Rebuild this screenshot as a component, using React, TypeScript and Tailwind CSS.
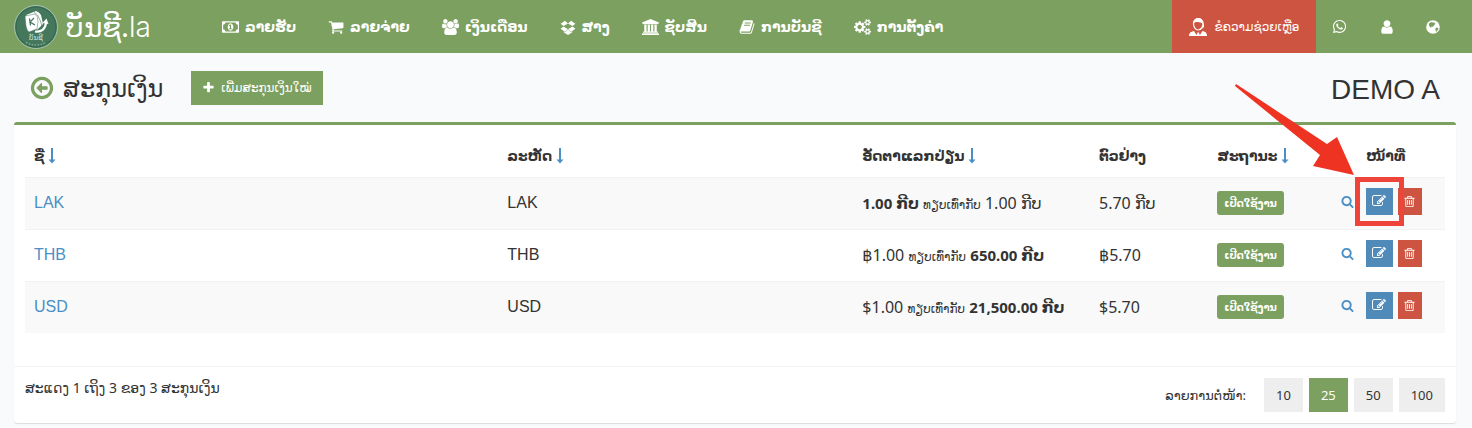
import type { ReactNode } from "react";
import { FaWhatsapp } from "react-icons/fa";

type IconProps = { path: string; wide?: boolean; className: string };

function Icon({ path, wide, className }: IconProps) {
  return (
    <svg
      viewBox={wide ? "0 0 1920 1792" : "0 0 1792 1792"}
      className={`shrink-0 ${className}`}
      fill="currentColor"
      aria-hidden="true"
    >
      <path d={path} />
    </svg>
  );
}

const icons = {
  money:
    "M768 1152h384v-96h-128v-448h-114l-148 137 77 80q42-37 55-57h2v288h-128v96zm512-256q0 70-21 142t-59.5 134-101.5 101-138 39-138-39-101.5-101-59.5-134-21-142 21-142 59.5-134 101.5-101 138-39 138 39 101.5 101 59.5 134 21 142zm512 256v-512q-106 0-181-75t-75-181h-1152q0 106-75 181t-181 75v512q106 0 181 75t75 181h1152q0-106 75-181t181-75zm128-832v1152q0 26-19 45t-45 19h-1792q-26 0-45-19t-19-45v-1152q0-26 19-45t45-19h1792q26 0 45 19t19 45z",
  cart: "M704 1536q0 52-38 90t-90 38-90-38-38-90 38-90 90-38 90 38 38 90zm896 0q0 52-38 90t-90 38-90-38-38-90 38-90 90-38 90 38 38 90zm128-1088v512q0 24-16.5 42.5t-40.5 21.5l-1044 122q13 60 13 70 0 16-24 64h920q26 0 45 19t19 45-19 45-45 19h-1024q-26 0-45-19t-19-45q0-11 8-31.5t16-36 21.5-40 15.5-29.5l-177-823h-204q-26 0-45-19t-19-45 19-45 45-19h256q16 0 28.5 6.5t19.5 15.5 13 24.5 8 26 5.5 29.5 4.5 26h1201q26 0 45 19t19 45z",
  users:
    "M593 896q-162 5-265 128h-134q-82 0-138-40.5t-56-118.5q0-353 124-353 6 0 43.5 21t97.5 42.5 119 21.5q67 0 133-23-5 37-5 66 0 159 90 293zm1071 637q0 120-73 189.5t-194 69.5h-874q-121 0-194-69.5t-73-189.5q0-53 3.5-103.5t14-109 26.5-108.5 43-97.5 62-81 85.5-53.5 111.5-20q10 0 43 21.5t73 48 107 48 135 21.5 135-21.5 107-48 73-48 43-21.5q61 0 111.5 20t85.5 53.5 62 81 43 97.5 26.5 108.5 14 109 3.5 103.5zm-1024-1277q0 106-75 181t-181 75-181-75-75-181 75-181 181-75 181 75 75 181zm704 384q0 159-112.5 271.5t-271.5 112.5-271.5-112.5-112.5-271.5 112.5-271.5 271.5-112.5 271.5 112.5 112.5 271.5zm576 225q0 78-56 118.5t-138 40.5h-134q-103-123-265-128 90-134 90-293 0-29-5-66 66 23 133 23 59 0 119-21.5t97.5-42.5 43.5-21q124 0 124 353zm-128-609q0 106-75 181t-181 75-181-75-75-181 75-181 181-75 181 75 75 181z",
  dropbox:
    "M402 829l494 305-342 285-490-319zm986 555v108l-490 293v1l-1-1-1 1v-1l-489-293v-108l147 96 342-284v-2l1 1 1-1v2l343 284zm-834-1177l342 285-494 304-338-270zm836 622l338 271-489 319-343-285zm-151-622l489 319-338 270-494-304z",
  bank: "M960 0l960 384v128h-128q0 26-20.5 45t-48.5 19h-1526q-28 0-48.5-19t-20.5-45h-128v-128zm-704 640h256v768h128v-768h256v768h128v-768h256v768h128v-768h256v768h59q28 0 48.5 19t20.5 45v64h-1664v-64q0-26 20.5-45t48.5-19h59v-768zm1595 960q28 0 48.5 19t20.5 45v128h-1920v-128q0-26 20.5-45t48.5-19h1782z",
  book: "M1703 478q40 57 18 129l-275 906q-19 64-76.5 107.5t-122.5 43.5h-923q-77 0-148.5-53.5t-99.5-131.5q-24-67-2-127 0-4 3-27t4-37q1-8-3-21.5t-3-19.5q2-11 8-21t16.5-23.5 16.5-23.5q23-38 45-91.5t30-91.5q3-10 .5-30t-.5-28q3-11 17-28t17-23q21-36 42-92t25-90q1-9-2.5-32t.5-28q4-13 22-30.5t22-22.5q19-26 42.5-84.5t27.5-96.5q1-8-3-25.5t-2-26.5q2-8 9-18t18-23 17-21q8-12 16.5-30.5t15-35 16-36 19.5-32 26.5-23.5 36-11.5 47.5 5.5l-1 3q38-9 51-9h761q74 0 114 56t18 130l-274 906q-36 119-71.5 153.5t-128.5 34.5h-869q-27 0-38 15-11 16-1 43 24 70 144 70h923q29 0 56-15.5t35-41.5l300-987q7-22 5-57 38 15 59 43zm-1064 2q-4 13 2 22.5t20 9.5h608q13 0 25.5-9.5t16.5-22.5l21-64q4-13-2-22.5t-20-9.5h-608q-13 0-25.5 9.5t-16.5 22.5zm-83 256q-4 13 2 22.5t20 9.5h608q13 0 25.5-9.5t16.5-22.5l21-64q4-13-2-22.5t-20-9.5h-608q-13 0-25.5 9.5t-16.5 22.5z",
  cogs: "M896 896q0-106-75-181t-181-75-181 75-75 181 75 181 181 75 181-75 75-181zm768 512q0-52-38-90t-90-38-90 38-38 90q0 53 37.5 90.5t90.5 37.5 90.5-37.5 37.5-90.5zm0-1024q0-52-38-90t-90-38-90 38-38 90q0 53 37.5 90.5t90.5 37.5 90.5-37.5 37.5-90.5zm-384 421v185q0 10-7 19.5t-16 10.5l-155 24q-11 35-32 76 34 48 90 115 7 11 7 20 0 12-7 19-23 30-82.5 89.5t-78.5 59.5q-11 0-21-7l-115-90q-37 19-77 31-11 108-23 155-7 24-30 24h-186q-11 0-20-7.5t-10-17.5l-23-153q-34-10-75-31l-118 89q-7 7-20 7-11 0-21-8-144-133-144-160 0-9 7-19 10-14 41-53t47-61q-23-44-35-82l-152-24q-10-1-17-9.5t-7-19.5v-185q0-10 7-19.5t16-10.5l155-24q11-35 32-76-34-48-90-115-7-11-7-20 0-12 7-20 22-30 82-89t79-59q11 0 21 7l115 90q34-18 77-32 11-108 23-154 7-24 30-24h186q11 0 20 7.5t10 17.5l23 153q34 10 75 31l118-89q8-7 20-7 11 0 21 8 144 133 144 160 0 8-7 19-12 16-42 54t-45 60q23 48 34 82l152 23q10 2 17 10.5t7 19.5zm640 533v140q0 16-149 31-12 27-30 52 51 113 51 138 0 4-4 7-122 71-124 71-8 0-46-47t-52-68q-20 2-30 2t-30-2q-14 21-52 68t-46 47q-2 0-124-71-4-3-4-7 0-25 51-138-18-25-30-52-149-15-149-31v-140q0-16 149-31 13-29 30-52-51-113-51-138 0-4 4-7 4-2 35-20t59-34 30-16q8 0 46 46.5t52 67.5q20-2 30-2t30 2q51-71 92-112l6-2q4 0 124 70 4 3 4 7 0 25-51 138 17 23 30 52 149 15 149 31zm0-1024v140q0 16-149 31-12 27-30 52 51 113 51 138 0 4-4 7-122 71-124 71-8 0-46-47t-52-68q-20 2-30 2t-30-2q-14 21-52 68t-46 47q-2 0-124-71-4-3-4-7 0-25 51-138-18-25-30-52-149-15-149-31v-140q0-16 149-31 13-29 30-52-51-113-51-138 0-4 4-7 4-2 35-20t59-34 30-16q8 0 46 46.5t52 67.5q20-2 30-2t30 2q51-71 92-112l6-2q4 0 124 70 4 3 4 7 0 25-51 138 17 23 30 52 149 15 149 31z",
  user: "M1536 1399q0 109-62.5 187t-150.5 78h-854q-88 0-150.5-78t-62.5-187q0-85 8.5-160.5t31.5-152 58.5-131 94-89 134.5-34.5q131 128 313 128t313-128q76 0 134.5 34.5t94 89 58.5 131 31.5 152 8.5 160.5zm-256-887q0 159-112.5 271.5t-271.5 112.5-271.5-112.5-112.5-271.5 112.5-271.5 271.5-112.5 271.5 112.5 112.5 271.5z",
  back: "M1280 800v192q0 13-9.5 22.5t-22.5 9.5h-352v192q0 14-9 23t-23 9q-12 0-24-10l-319-319q-9-9-9-23t9-23l320-320q9-9 23-9 13 0 22.5 9.5t9.5 22.5v192h352q13 0 22.5 9.5t9.5 22.5zm160 96q0-148-73-273t-198-198-273-73-273 73-198 198-73 273 73 273 198 198 273 73 273-73 198-198 73-273zm224 0q0 209-103 385.5t-279.5 279.5-385.5 103-385.5-103-279.5-279.5-103-385.5 103-385.5 279.5-279.5 385.5-103 385.5 103 279.5 279.5 103 385.5z",
  plus: "M1600 736v192q0 40-28 68t-68 28h-416v416q0 40-28 68t-68 28h-192q-40 0-68-28t-28-68v-416h-416q-40 0-68-28t-28-68v-192q0-40 28-68t68-28h416v-416q0-40 28-68t68-28h192q40 0 68 28t28 68v416h416q40 0 68 28t28 68z",
  search:
    "M1216 832q0-185-131.5-316.5t-316.5-131.5-316.5 131.5-131.5 316.5 131.5 316.5 316.5 131.5 316.5-131.5 131.5-316.5zm512 832q0 52-38 90t-90 38q-54 0-90-38l-343-342q-179 124-399 124-143 0-273.5-55.5t-225-150-150-225-55.5-273.5 55.5-273.5 150-225 225-150 273.5-55.5 273.5 55.5 225 150 150 225 55.5 273.5q0 220-124 399l343 343q37 37 37 90z",
  edit: "M888 1184l116-116-152-152-116 116v56h96v96h56zm440-720q-16-16-33 1l-350 350q-17 17-1 33t33-1l350-350q17-17 1-33zm80 594v190q0 119-84.5 203.5t-203.5 84.5h-832q-119 0-203.5-84.5t-84.5-203.5v-832q0-119 84.5-203.5t203.5-84.5h832q63 0 117 25 15 7 18 23 3 17-9 29l-49 49q-14 14-32 8-23-6-45-6h-832q-66 0-113 47t-47 113v832q0 66 47 113t113 47h832q66 0 113-47t47-113v-126q0-13 9-22l64-64q15-15 35-7t20 29zm-96-738l288 288-672 672h-288v-288zm444 132l-92 92-288-288 92-92q28-28 68-28t68 28l152 152q28 28 28 68t-28 68z",
  trash:
    "M704 736v576q0 14-9 23t-23 9h-64q-14 0-23-9t-9-23v-576q0-14 9-23t23-9h64q14 0 23 9t9 23zm256 0v576q0 14-9 23t-23 9h-64q-14 0-23-9t-9-23v-576q0-14 9-23t23-9h64q14 0 23 9t9 23zm256 0v576q0 14-9 23t-23 9h-64q-14 0-23-9t-9-23v-576q0-14 9-23t23-9h64q14 0 23 9t9 23zm128 724v-948h-896v948q0 22 7 40.5t14.5 27 10.5 8.5h832q3 0 10.5-8.5t14.5-27 7-40.5zm-672-1076h448l-48-117q-7-9-17-11h-317q-10 2-17 11zm928 32v64q0 14-9 23t-23 9h-96v948q0 83-47 143.5t-113 60.5h-832q-66 0-113-58.5t-47-141.5v-952h-96q-14 0-23-9t-9-23v-64q0-14 9-23t23-9h309l70-167q15-37 54-63t79-26h320q40 0 79 26t54 63l70 167h309q14 0 23 9t9 23z",
};

const wideIcon = "h-4 w-[17px]";

const menu = [
  { label: "ລາຍຮັບ", icon: <Icon wide path={icons.money} className={wideIcon} /> },
  { label: "ລາຍຈ່າຍ", icon: <Icon path={icons.cart} className="size-4" /> },
  { label: "ເງິນເດືອນ", icon: <Icon wide path={icons.users} className={wideIcon} /> },
  { label: "ສາງ", icon: <Icon path={icons.dropbox} className="size-4" /> },
  { label: "ຊັບສິນ", icon: <Icon wide path={icons.bank} className={wideIcon} /> },
  { label: "ການບັນຊີ", icon: <Icon path={icons.book} className="size-4" /> },
  { label: "ການຕັ້ງຄ່າ", icon: <Icon wide path={icons.cogs} className={wideIcon} /> },
];

const same = <span className="text-xs">ທຽບເທົ່າກັບ</span>;

const currencies = [
  { code: "LAK", rate: <><b className="text-[15px]">1.00 ກີບ</b> {same} 1.00 ກີບ</>, example: "5.70 ກີບ" },
  { code: "THB", rate: <>฿1.00 {same} <b className="text-[15px]">650.00 ກີບ</b></>, example: "฿5.70" },
  { code: "USD", rate: <>$1.00 {same} <b className="text-[15px]">21,500.00 ກີບ</b></>, example: "$5.70" },
];

const pageSizes = [10, 25, 50, 100];

function Logo() {
  return (
    <svg viewBox="0 0 44 44" className="size-11 shrink-0" aria-hidden="true">
      <circle cx="22" cy="22" r="21.500" fill="#44775c" stroke="#a9c4b4" />
      <circle cx="22" cy="22" r="20" fill="none" stroke="#34684e" />
      <path d="M12 10l10-4q3 1 5 4l2 9-6 6z" fill="#fff" />
      <path d="M20 7q4 2 6 8l2 6" fill="none" stroke="#44775c" strokeWidth=".6" />
      <path d="M11 11l10-2q3 2 3 8l-1 7-8 3q-2-1-3-6z" fill="#fff" stroke="#44775c" strokeWidth=".5" />
      <path d="M15.500 13.500l1 7M20 13l-4 4 5 3" fill="none" stroke="#44775c" strokeWidth="1.300" />
      <path d="M21 26.500c7 1 10.500-3 11-9" fill="none" stroke="#fff" strokeWidth="2.200" />
      <path d="M28.500 18l4-4.500 2 5.500z" fill="#fff" />
      <text x="22" y="35" textAnchor="middle" fontSize="7" fill="#d5e3da">
        ບັນຊີ
      </text>
      <path d="M12 37.500q10 5 20 0" fill="none" stroke="#84a994" strokeWidth="1.500" strokeDasharray="1.500 1.500" />
    </svg>
  );
}

function SupportIcon() {
  return (
    <svg viewBox="0 0 18 19" className="h-5 w-[18px] shrink-0" aria-hidden="true">
      <path
        d="M4.500 6c0-6.500 9.500-6.500 9.500 0 0 3-1.800 6.500-4.800 6.500S4.500 9 4.500 6z"
        fill="none"
        stroke="currentColor"
        strokeWidth="1.200"
      />
      <path d="M4 7c-.5-8.500 11-8.500 10.500 0-2-2.500-4-2-6-2.500C6.500 4.500 5 5 4 7z" fill="currentColor" />
      <path d="M14.500 6.500v3q-1 2-4 2" fill="none" stroke="currentColor" />
      <path d="M0 18.500c0-3.500 2-4 5-5l2.500 4 1-2.500h1.400l1 2.500 2.600-4c3 1 4.500 1.500 4.500 5z" fill="currentColor" />
    </svg>
  );
}

function GlobeIcon() {
  return (
    <svg viewBox="0 0 14 14" className="size-[14px]" aria-hidden="true">
      <circle cx="7" cy="7" r="6.800" fill="currentColor" />
      <path
        d="M3 3.500q1.500-1.500 3-1.500l1 .7 1.500-.5L8.500 3l1 .7L8 5.500 6.500 7 5 6.500l.5 1.500L4 7 3 5.500zM9.500 8l1.500-.5 1.500 1-1 2L10 12l-.5-2z"
        fill="#7ba05f"
      />
    </svg>
  );
}

function SortArrow() {
  return (
    <svg viewBox="0 0 8 16" className="ml-1 inline-block h-4 w-2 text-[#4a8fc6]" aria-hidden="true">
      <path d="M3 0h2v11.500h2.500L4 15.500 .5 11.500H3z" fill="currentColor" />
    </svg>
  );
}

function HeadCell({ children, className = "text-left", sort }: { children: ReactNode; className?: string; sort?: boolean }) {
  return (
    <th className={`px-[9px] text-sm font-bold whitespace-nowrap ${className}`}>
      {sort ? (
        <button type="button" className="flex items-center font-bold">
          {children}
          <SortArrow />
        </button>
      ) : (
        children
      )}
    </th>
  );
}

// red frame and pointer drawn over the edit button of the first row
function Pointer() {
  return (
    <>
      <span className="pointer-events-none absolute -inset-[11px] z-10 border-[5px] border-[#ee4439]" />
      <svg
        viewBox="0 0 120 92"
        className="pointer-events-none absolute right-[38px] bottom-[39px] z-10 h-[92px] w-[120px] max-w-none"
        aria-hidden="true"
      >
        <path d="M1 0L92 60 102 53 119 91 78 82 85 71 0 2z" fill="#ef3323" />
      </svg>
    </>
  );
}

export default function App() {
  return (
    <div className="bg-[#f9fafc] pb-1 font-['Noto_Sans','DejaVu_Sans',sans-serif] text-base text-[#333]">
      <header className="flex h-[53px] items-center bg-[#7ba05f] text-white">
        <a href="#home" className="flex w-[222px] shrink-0 items-center gap-2 pl-[14px]">
          <Logo />
          <span className="font-['Inter','DejaVu_Sans',sans-serif] text-[28px] leading-10 font-light">
            ບັນຊີ<b>.</b>la
          </span>
        </a>
        <nav className="flex gap-8">
          {menu.map((item) => (
            <a
              key={item.label}
              href="#menu"
              className="flex items-center gap-[6px] text-sm font-bold whitespace-nowrap"
            >
              {item.icon}
              {item.label}
            </a>
          ))}
        </nav>
        <div className="ml-auto flex h-full shrink-0 items-center">
          <button type="button" className="flex h-full w-36 items-center justify-center gap-2 bg-[#cd5441] text-xs whitespace-nowrap">
            <SupportIcon />
            ຂໍຄວາມຊ່ວຍເຫຼືອ
          </button>
          <div className="flex w-[156px] justify-between pr-8 pl-4">
            <button type="button" aria-label="WhatsApp">
              <FaWhatsapp className="size-[15px]" />
            </button>
            <button type="button" aria-label="User">
              <Icon path={icons.user} className="size-4" />
            </button>
            <button type="button" aria-label="Language">
              <GlobeIcon />
            </button>
          </div>
        </div>
      </header>

      <div className="flex h-[69px] items-center pr-8 pl-[29px]">
        <a href="#back" aria-label="Back" className="text-[#7ba05f]">
          <Icon path={icons.back} className="size-[26px]" />
        </a>
        <h1 className="ml-2 text-2xl">ສະກຸນເງິນ</h1>
        <button type="button" className="ml-7 flex h-[34px] items-center gap-[6px] bg-[#7ba05f] px-[11px] text-xs text-white">
          <Icon path={icons.plus} className="size-[13px]" />
          ເພີ່ມສະກຸນເງິນໃໝ່
        </button>
        <p className="ml-auto pt-1 font-['Liberation_Sans',sans-serif] text-[28px]">DEMO A</p>
      </div>

      <main className="mr-4 ml-[14px] rounded-[3px] border-t-[3px] border-[#7ba05f] bg-white shadow-[0_1px_1px_rgba(0,0,0,0.12)]">
        <div className="px-[11px] pt-[10px] pb-[33px]">
          <table className="w-full table-fixed border-collapse">
            <thead>
              <tr className="h-[42px]">
                <HeadCell sort className="w-1/3 text-left">ຊື່</HeadCell>
                <HeadCell sort className="w-1/4 text-left">ລະຫັດ</HeadCell>
                <HeadCell sort className="w-1/6 text-left">ອັດຕາແລກປ່ຽນ</HeadCell>
                <HeadCell className="w-1/12 text-left">ຕົວຢ່າງ</HeadCell>
                <HeadCell sort className="w-1/12 text-left">ສະຖານະ</HeadCell>
                <HeadCell className="w-1/12 text-center">ໜ້າທີ່</HeadCell>
              </tr>
            </thead>
            <tbody>
              {currencies.map((row, i) => (
                <tr key={row.code} className="h-[52px] border-t border-[#f2f2f2] odd:bg-[#f9f9f9]">
                  <td className="px-[9px] font-['Liberation_Sans',sans-serif]">
                    <a href="#currency" className="text-[#4a8fc6]">{row.code}</a>
                  </td>
                  <td className="px-[9px] font-['Liberation_Sans',sans-serif]">{row.code}</td>
                  <td className="px-[9px] whitespace-nowrap">{row.rate}</td>
                  <td className="px-[9px] whitespace-nowrap">{row.example}</td>
                  <td className="px-[9px]">
                    <span className="flex h-6 w-fit items-center rounded-[3px] bg-[#7ba05f] px-[7px] text-[10px] font-bold whitespace-nowrap text-white">
                      ເປີດໃຊ້ງານ
                    </span>
                  </td>
                  <td className="pb-1 pl-[14px]">
                    <div className="flex items-center">
                      <button type="button" aria-label="Show" className="mr-3 text-[#4a8fc6]">
                        <Icon path={icons.search} className="size-[13px]" />
                      </button>
                      <div className="relative mr-[5px]">
                        <button type="button" aria-label="Edit" className="flex size-[27px] items-center justify-center bg-[#4f8ab9] text-white">
                          <Icon path={icons.edit} className="size-[14px]" />
                        </button>
                        {i === 0 && <Pointer />}
                      </div>
                      <button type="button" aria-label="Delete" className="flex h-[27px] w-6 items-center justify-center bg-[#cd5441] text-white">
                        <Icon path={icons.trash} className="size-[13px]" />
                      </button>
                    </div>
                  </td>
                </tr>
              ))}
            </tbody>
          </table>
        </div>

        <footer className="flex items-start justify-between border-t border-[#f4f4f4] px-[11px] pt-[11px] pb-[11px] text-sm">
          <p>ສະແດງ 1 ເຖິງ 3 ຂອງ 3 ສະກຸນເງິນ</p>
          <div className="flex items-center gap-[6px] text-[13px]">
            <span className="mr-3">ລາຍການຕໍ່ໜ້າ:</span>
            {pageSizes.map((size) => (
              <button
                key={size}
                type="button"
                className={`h-[34px] px-3 ${size === 25 ? "bg-[#7ba05f] text-white" : "bg-[#eee]"}`}
              >
                {size}
              </button>
            ))}
          </div>
        </footer>
      </main>
    </div>
  );
}
